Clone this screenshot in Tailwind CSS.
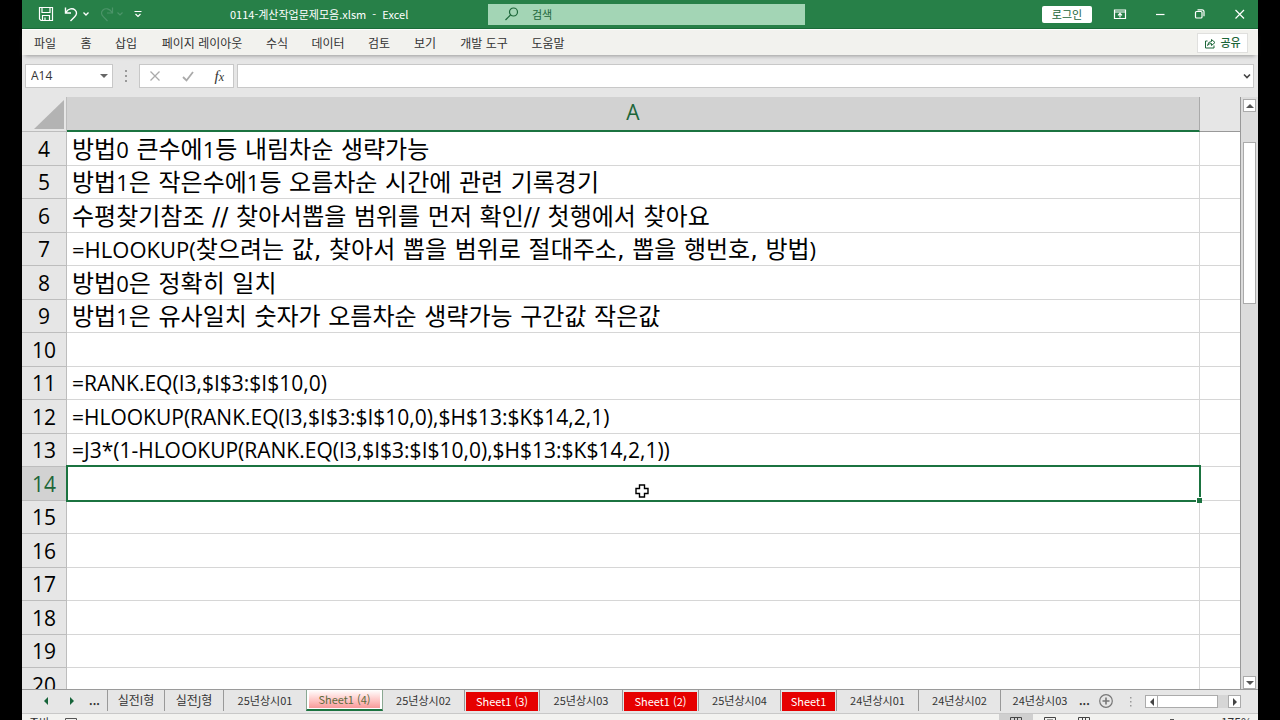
<!DOCTYPE html>
<html lang="ko">
<head>
<meta charset="utf-8">
<meta name="viewport" content="width=device-width, initial-scale=1">
<title>0114-계산작업문제모음.xlsm - Excel</title>
<script src="https://cdn.jsdelivr.net/npm/@tailwindcss/browser@4"></script>
</head>
<body class="h-screen overflow-hidden bg-black px-[22px] font-['Noto_Sans_CJK_KR',sans-serif] text-[11px] text-[#333]">
<div class="flex h-[calc(100vh+17px)] flex-col bg-[#e6e6e6]">

  <!-- Title bar -->
  <header class="flex h-[29px] shrink-0 items-center border-b border-[#1b6b39] bg-[#278048] text-white">
    <div class="flex w-[208px] shrink-0 items-center pl-4">
      <button aria-label="저장" class="w-4"><svg class="size-4" viewBox="0 0 16 16" fill="none" stroke="currentColor" stroke-width="1.2"><path d="M1.5 1.5h13v13h-11.500l-1.500-1.500zM4 1.500v5h8v-5M4.500 14.500v-5h7v5M7 14v-2.500"/></svg></button>
      <button aria-label="실행 취소" class="ml-2.5 w-4"><svg class="size-4" viewBox="0 0 16 16" fill="none" stroke="currentColor" stroke-width="1.4"><path d="M1.500 1.500v5.500h5.500M1.800 6.500C4.500 2.500 8.500 1.800 11 4c2.200 2 1.900 4.500-.3 6.700L6.500 15"/></svg></button>
      <button aria-label="실행 취소 목록" class="ml-0.5 w-2"><svg class="h-2 w-2" viewBox="0 0 8 8" fill="none" stroke="currentColor" stroke-width="1.300"><path d="M1.500 2.500 4 5l2.500-2.500"/></svg></button>
      <button aria-label="다시 실행" class="ml-2 w-4 text-[#4c9469]"><svg class="size-4" viewBox="0 0 16 16" fill="none" stroke="currentColor" stroke-width="1.200"><path d="M14.500 1.500v5.500H9M14.200 6.500C11.500 2.500 7.500 1.800 5 4c-2.200 2-1.900 4.500.3 6.700L9.500 15"/></svg></button>
      <button aria-label="다시 실행 목록" class="ml-0.5 w-2 text-[#4c9469]"><svg class="h-2 w-2" viewBox="0 0 8 8" fill="none" stroke="currentColor" stroke-width="1.200"><path d="M1.500 2.500 4 5l2.500-2.500"/></svg></button>
      <button aria-label="빠른 실행 도구 모음 사용자 지정" class="ml-2.5 w-2"><svg class="h-2 w-2" viewBox="0 0 8 8" fill="none" stroke="currentColor" stroke-width="1.200"><path d="M.5 1.500h7M1.500 4 4 6.500 6.500 4"/></svg></button>
    </div>
    <h1 class="w-[258px] shrink-0 whitespace-pre">0114-계산작업문제모음.xlsm  -  Excel</h1>
    <label class="flex h-[21px] w-[317px] shrink-0 items-center bg-[#a3d5b5] pl-4 text-[#1c6639]">
      <svg class="size-4 shrink-0" viewBox="0 0 16 16" fill="none" stroke="currentColor" stroke-width="1.200"><circle cx="9.500" cy="6" r="4"/><path d="M6.500 9 1.500 14"/></svg>
      <input aria-label="검색" placeholder="검색" class="ml-3 w-60 bg-transparent outline-none placeholder:text-[#1c6639]">
    </label>
    <div class="ml-auto flex items-center pr-2.5">
      <button class="h-[17px] w-[50px] rounded-xs bg-white leading-[17px] text-[#1c6639]">로그인</button>
      <button aria-label="리본 메뉴 표시 옵션" class="ml-5 w-4"><svg class="size-4" viewBox="0 0 16 16" fill="none" stroke="currentColor" stroke-width="1.200"><path d="M2.500 4h11v8.500h-11zM2.500 6h11M8 11.500v-4M6 9.300l2-2 2 2"/></svg></button>
      <button aria-label="최소화" class="ml-6 w-4"><svg class="size-4" viewBox="0 0 16 16" fill="none" stroke="currentColor" stroke-width="1.200"><path d="M4 8.500h8.500"/></svg></button>
      <button aria-label="이전 크기로 복원" class="ml-6 w-4"><svg class="size-4" viewBox="0 0 16 16" fill="none" stroke="currentColor" stroke-width="1.200"><rect x="3.500" y="5.500" width="6.500" height="6.500" rx="1"/><path d="M5.500 3.800h4.500q2 0 2 2v4.500"/></svg></button>
      <button aria-label="닫기" class="ml-6 w-4"><svg class="size-4" viewBox="0 0 16 16" fill="none" stroke="currentColor" stroke-width="1.200"><path d="m3.500 4 8.500 8.500M12 4l-8.500 8.500"/></svg></button>
    </div>
  </header>

  <!-- Ribbon tabs -->
  <nav class="flex h-[26px] shrink-0 items-center border-t border-white bg-[#f2f2ee] pr-2.5 pl-px text-[12px] shadow-[0_4px_4px_-3px_#999]">
    <a href="#" class="w-11 text-center">파일</a>
    <a href="#" class="w-[38px] text-center">홈</a>
    <a href="#" class="w-[42px] text-center">삽입</a>
    <a href="#" class="w-[110px] text-center">페이지 레이아웃</a>
    <a href="#" class="w-10 text-center">수식</a>
    <a href="#" class="w-[62px] text-center">데이터</a>
    <a href="#" class="w-10 text-center">검토</a>
    <a href="#" class="w-[52px] text-center">보기</a>
    <a href="#" class="w-[66px] text-center">개발 도구</a>
    <a href="#" class="w-[62px] text-center">도움말</a>
    <button class="ml-auto flex h-5 w-[51px] items-center justify-center gap-1 border border-[#e0e0de] bg-white text-[11px] font-medium text-[#1c6639]">
      <svg class="size-3" viewBox="0 0 12 12" fill="none" stroke="currentColor"><path d="M3.500 4h-2v7h8.500V8.500M3.500 8.500q.5-4 4-4v-2L11 5.500 7.500 8.500v-2q-2.500 0-4 2z"/></svg>공유
    </button>
  </nav>

  <!-- Formula bar -->
  <section class="flex h-[42px] shrink-0 items-center pr-1 pl-[3px]">
    <div class="flex h-6 w-[88px] items-center border border-[#c8c8c8] bg-white">
      <input aria-label="이름 상자" value="A14" class="w-[74px] pl-[5px] font-['Open_Sans',sans-serif] text-[12px] outline-none">
      <button aria-label="이름 목록"><svg class="h-1 w-2" viewBox="0 0 8 4" fill="#666"><path d="M0 0h8L4 4z"/></svg></button>
    </div>
    <svg class="mx-[11px] h-3 w-1 shrink-0" viewBox="0 0 4 12" fill="#999"><path d="M1 0h2v2H1zM1 5h2v2H1zM1 10h2v2H1z"/></svg>
    <div class="flex h-6 w-[95px] shrink-0 items-center justify-between border border-[#c8c8c8] bg-white px-[9px]">
      <button aria-label="취소"><svg class="size-3" viewBox="0 0 12 12" fill="none" stroke="#aaa" stroke-width="1.300"><path d="m1.500 1.500 9 9M10.500 1.500l-9 9"/></svg></button>
      <button aria-label="입력"><svg class="size-3" viewBox="0 0 12 12" fill="none" stroke="#aaa" stroke-width="1.800"><path d="m1 7 3.500 3.500L11 2"/></svg></button>
      <button aria-label="함수 삽입" class="font-['Liberation_Serif',serif] text-[15px] leading-4 italic">f<span class="text-[12px]">x</span></button>
    </div>
    <div class="ml-[3px] flex h-6 min-w-0 grow items-center border border-[#c8c8c8] bg-white pr-0.5">
      <input aria-label="수식 입력줄" class="min-w-0 grow px-1 outline-none">
      <button aria-label="수식 입력줄 확장"><svg class="size-2" viewBox="0 0 8 8" fill="none" stroke="#444" stroke-width="1.600"><path d="M1 2.500 4 5.500l3-3"/></svg></button>
    </div>
  </section>

  <!-- Worksheet -->
  <main class="flex min-h-0 grow">
    <div class="min-w-0 grow overflow-hidden border-r border-[#999]">
      <table class="w-full table-fixed border-separate border-spacing-0 font-['Open_Sans','Noto_Sans_CJK_KR',sans-serif] text-[21px] leading-7 text-black [&_tbody_td]:border-r [&_tbody_td]:border-b [&_tbody_td]:border-[#d6d6d6] [&_tbody_td]:bg-white [&_tbody_td]:p-0 [&_tbody_td]:pl-[5px] [&_tbody_td]:whitespace-nowrap [&_tbody_td:last-child]:border-r-0 [&_tbody_th]:border-r [&_tbody_th]:border-b [&_tbody_th]:border-[#bdbdbd] [&_tbody_th]:p-0 [&_tbody_th]:font-normal [&_tbody_tr]:h-[33px] [&_tbody_tr:nth-child(odd)]:h-[34px] [&_b]:font-['DejaVu_Sans','Noto_Sans_CJK_KR',sans-serif] [&_b]:text-[24px] [&_b]:leading-none [&_b]:font-normal">
        <colgroup><col class="w-[45px]"><col><col class="w-[40px]"></colgroup>
        <thead>
          <tr class="h-[35px]">
            <th class="border-r border-b border-[#bdbdbd] p-0"><button aria-label="모두 선택" class="block pl-3"><svg class="h-[29px] w-[30px]" viewBox="0 0 30 29" fill="#b3b3b3"><path d="M30 0v29H0z"/></svg></button></th>
            <th class="border-r border-b-2 border-r-[#aaa] border-b-[#1b7340] bg-[#d2d2d2] p-0 pb-1 font-normal text-[#1c6639]">A</th>
            <th class="border-b border-[#999] p-0"></th>
          </tr>
        </thead>
        <tbody>
          <tr><th>4</th><td class="text-[22px]"><b>방법</b>0<b> 큰수에</b>1<b>등 내림차순 생략가능</b></td><td></td></tr>
          <tr><th>5</th><td class="text-[22px]"><b>방법</b>1<b>은 작은수에</b>1<b>등 오름차순 시간에 관련 기록경기</b></td><td></td></tr>
          <tr><th>6</th><td class="text-[22px]"><b>수평찾기참조 // 찾아서뽑을 범위를 먼저 확인// 첫행에서 찾아요</b></td><td></td></tr>
          <tr><th>7</th><td class="text-[22px]">=HLOOKUP(<b>찾으려는 값, 찾아서 뽑을 범위로 절대주소, 뽑을 행번호, 방법</b>)</td><td></td></tr>
          <tr><th>8</th><td class="text-[22px]"><b>방법</b>0<b>은 정확히 일치</b></td><td></td></tr>
          <tr><th>9</th><td class="text-[22px]"><b>방법</b>1<b>은 유사일치 숫자가 오름차순 생략가능 구간값 작은값</b></td><td></td></tr>
          <tr><th>10</th><td></td><td></td></tr>
          <tr><th>11</th><td>=RANK.EQ(I3,$I$3:$I$10,0)</td><td></td></tr>
          <tr><th>12</th><td>=HLOOKUP(RANK.EQ(I3,$I$3:$I$10,0),$H$13:$K$14,2,1)</td><td></td></tr>
          <tr><th>13</th><td>=J3*(1-HLOOKUP(RANK.EQ(I3,$I$3:$I$10,0),$H$13:$K$14,2,1))</td><td></td></tr>
          <tr><th class="bg-[#d2d2d2] text-[#1c6639]">14</th><td class="relative"><div class="absolute -top-0.5 -right-0.5 -bottom-0.5 -left-px border-2 border-[#1b7340]"><span class="absolute -right-[3px] -bottom-[3px] size-[6px] border-t border-l border-white bg-[#1b7340]"></span></div>
            <svg class="absolute top-[17px] left-1/2 ml-0.5 size-[14px]" viewBox="0 0 14 14" fill="#fff" stroke="#000" stroke-width="1.400"><path d="M4.500 1h5v3.500H13v5H9.500V13h-5V9.500H1v-5h3.500z"/></svg></td><td></td></tr>
          <tr><th>15</th><td></td><td></td></tr>
          <tr><th>16</th><td></td><td></td></tr>
          <tr><th>17</th><td></td><td></td></tr>
          <tr><th>18</th><td></td><td></td></tr>
          <tr><th>19</th><td></td><td></td></tr>
          <tr><th>20</th><td></td><td></td></tr>
        </tbody>
      </table>
    </div>
    <div class="flex w-[17px] shrink-0 flex-col items-center bg-[#dcdcdc] pt-[2px]">
      <button aria-label="위로 스크롤" class="flex size-[13px] items-center justify-center border border-[#ababab] bg-white"><svg class="h-1 w-2" viewBox="0 0 8 4" fill="#555"><path d="M0 4h8L4 0z"/></svg></button>
      <div class="mt-[30px] h-[162px] w-[13px] border border-[#ababab] bg-white"></div>
      <button aria-label="아래로 스크롤" class="mt-auto flex size-[13px] items-center justify-center border border-[#ababab] bg-white"><svg class="h-1 w-2" viewBox="0 0 8 4" fill="#555"><path d="M0 0h8L4 4z"/></svg></button>
    </div>
  </main>

  <!-- Sheet tabs -->
  <nav class="flex h-[25px] shrink-0 items-start border-t border-b border-[#9a9a9a] border-b-[#c8c8c8] [&>button]:h-[21px] [&>button]:shrink-0">
    <button aria-label="이전 시트" class="flex w-12 items-center justify-center"><svg class="h-2 w-1" viewBox="0 0 4 8" fill="#17643a"><path d="M4 0v8L0 4z"/></svg></button>
    <button aria-label="다음 시트" class="flex w-3 items-center"><svg class="h-2 w-1" viewBox="0 0 4 8" fill="#17643a"><path d="M0 0v8l4-4z"/></svg></button>
    <button class="w-[25px] font-bold" aria-label="이전 시트 목록">...</button>
    <button class="w-[58px] border-x border-[#999] font-['Open_Sans','Noto_Sans_CJK_KR',sans-serif] text-[12px]">실전I형</button>
    <button class="w-[59px] border-r border-[#999] font-['Open_Sans','Noto_Sans_CJK_KR',sans-serif] text-[12px]">실전J형</button>
    <button class="w-[82px]">25년상시01</button>
    <button class="w-[77px] border-x border-b-2 border-x-[#8aa892] border-b-[#1b7340] bg-white px-0.5 pb-px text-[#5f6b3c]"><span class="block bg-linear-to-b from-white to-[#f79a9a] leading-[18px]">Sheet1 (4)</span></button>
    <button class="w-[82px] border-r border-[#999]">25년상시02</button>
    <button class="w-[75px] border-r border-[#999] px-px"><span class="mt-px block bg-[#e60000] leading-[19px] text-white">Sheet1 (3)</span></button>
    <button class="w-[83px] border-r border-[#999]">25년상시03</button>
    <button class="w-[76px] border-r border-[#999] px-px"><span class="mt-px block bg-[#e60000] leading-[19px] text-white">Sheet1 (2)</span></button>
    <button class="w-[82px] border-r border-[#999]">25년상시04</button>
    <button class="w-[56px] border-r border-[#999] px-px"><span class="mt-px block bg-[#e60000] leading-[19px] text-white">Sheet1</span></button>
    <button class="w-[82px] border-r border-[#999]">24년상시01</button>
    <button class="w-[82px] border-r border-[#999]">24년상시02</button>
    <button class="w-[78px]">24년상시03</button>
    <button class="w-2 font-bold" aria-label="다음 시트 목록">...</button>
    <button aria-label="새 시트" class="ml-3 flex items-center"><svg class="size-[14px]" viewBox="0 0 14 14" fill="none" stroke="#777" stroke-width="1.200"><circle cx="7" cy="7" r="6.300"/><path d="M7 3.500v7M3.500 7h7" stroke-width="1.600"/></svg></button>
    <svg class="mt-1.5 ml-4 h-3 w-1 shrink-0" viewBox="0 0 4 12" fill="#999"><path d="M1 1h1.500v1.500H1zM1 5h1.500v1.500H1zM1 9h1.500v1.500H1z"/></svg>
    <div class="mt-[5px] mr-[17px] ml-auto flex h-[13px] w-[96px] shrink-0 bg-[#d6d6d6]">
      <button aria-label="왼쪽으로 스크롤" class="flex w-[13px] items-center justify-center border border-[#ababab] bg-white"><svg class="h-2 w-1" viewBox="0 0 4 8" fill="#444"><path d="M4 0v8L0 4z"/></svg></button>
      <div class="w-[60px] border border-l-0 border-[#ababab] bg-white"></div>
      <button aria-label="오른쪽으로 스크롤" class="ml-auto flex w-[13px] items-center justify-center border border-[#ababab] bg-white"><svg class="h-2 w-1" viewBox="0 0 4 8" fill="#444"><path d="M0 0v8l4-4z"/></svg></button>
    </div>
  </nav>

  <!-- Status bar -->
  <footer class="flex h-[23px] shrink-0 items-start bg-[#f2f2f0] pr-1.5 pl-[7px] leading-4">
    <span class="w-9">준비</span>
    <svg class="mt-1 h-3 w-3" viewBox="0 0 12 12" fill="none" stroke="#555"><path d="M.5.500h11v10H.5zM.5 2.500h11"/></svg>
    <div class="ml-auto flex">
      <button aria-label="기본" class="flex h-[22px] w-[34px] justify-center bg-[#cfcfcf] pt-[3px]"><svg class="h-3 w-3" viewBox="0 0 12 12" fill="none" stroke="#444"><path d="M.5.500h11v10H.5zM4.500.500v10M7.500.500v10M.5 4h11"/></svg></button>
      <button aria-label="페이지 레이아웃" class="flex w-[34px] justify-center pt-[3px]"><svg class="h-3 w-3" viewBox="0 0 12 12" fill="none" stroke="#444"><path d="M.5.500h11v10H.5zM3 3h6v5H3z"/></svg></button>
      <button aria-label="페이지 나누기 미리 보기" class="flex w-[34px] justify-center pt-[3px]"><svg class="h-3 w-3" viewBox="0 0 12 12" fill="none" stroke="#444"><path d="M.5.500h11v10H.5zM4.500.500v5h3v-5"/></svg></button>
    </div>
    <svg class="mt-[5px] ml-2 h-3 w-[100px]" viewBox="0 0 100 12" stroke="#777" fill="#555"><path d="M4 6h88"/><path d="M61 0h4v10h-4z" stroke="none"/></svg>
    <span class="ml-3 text-[12px]">175%</span>
  </footer>
</div>
</body>
</html>
